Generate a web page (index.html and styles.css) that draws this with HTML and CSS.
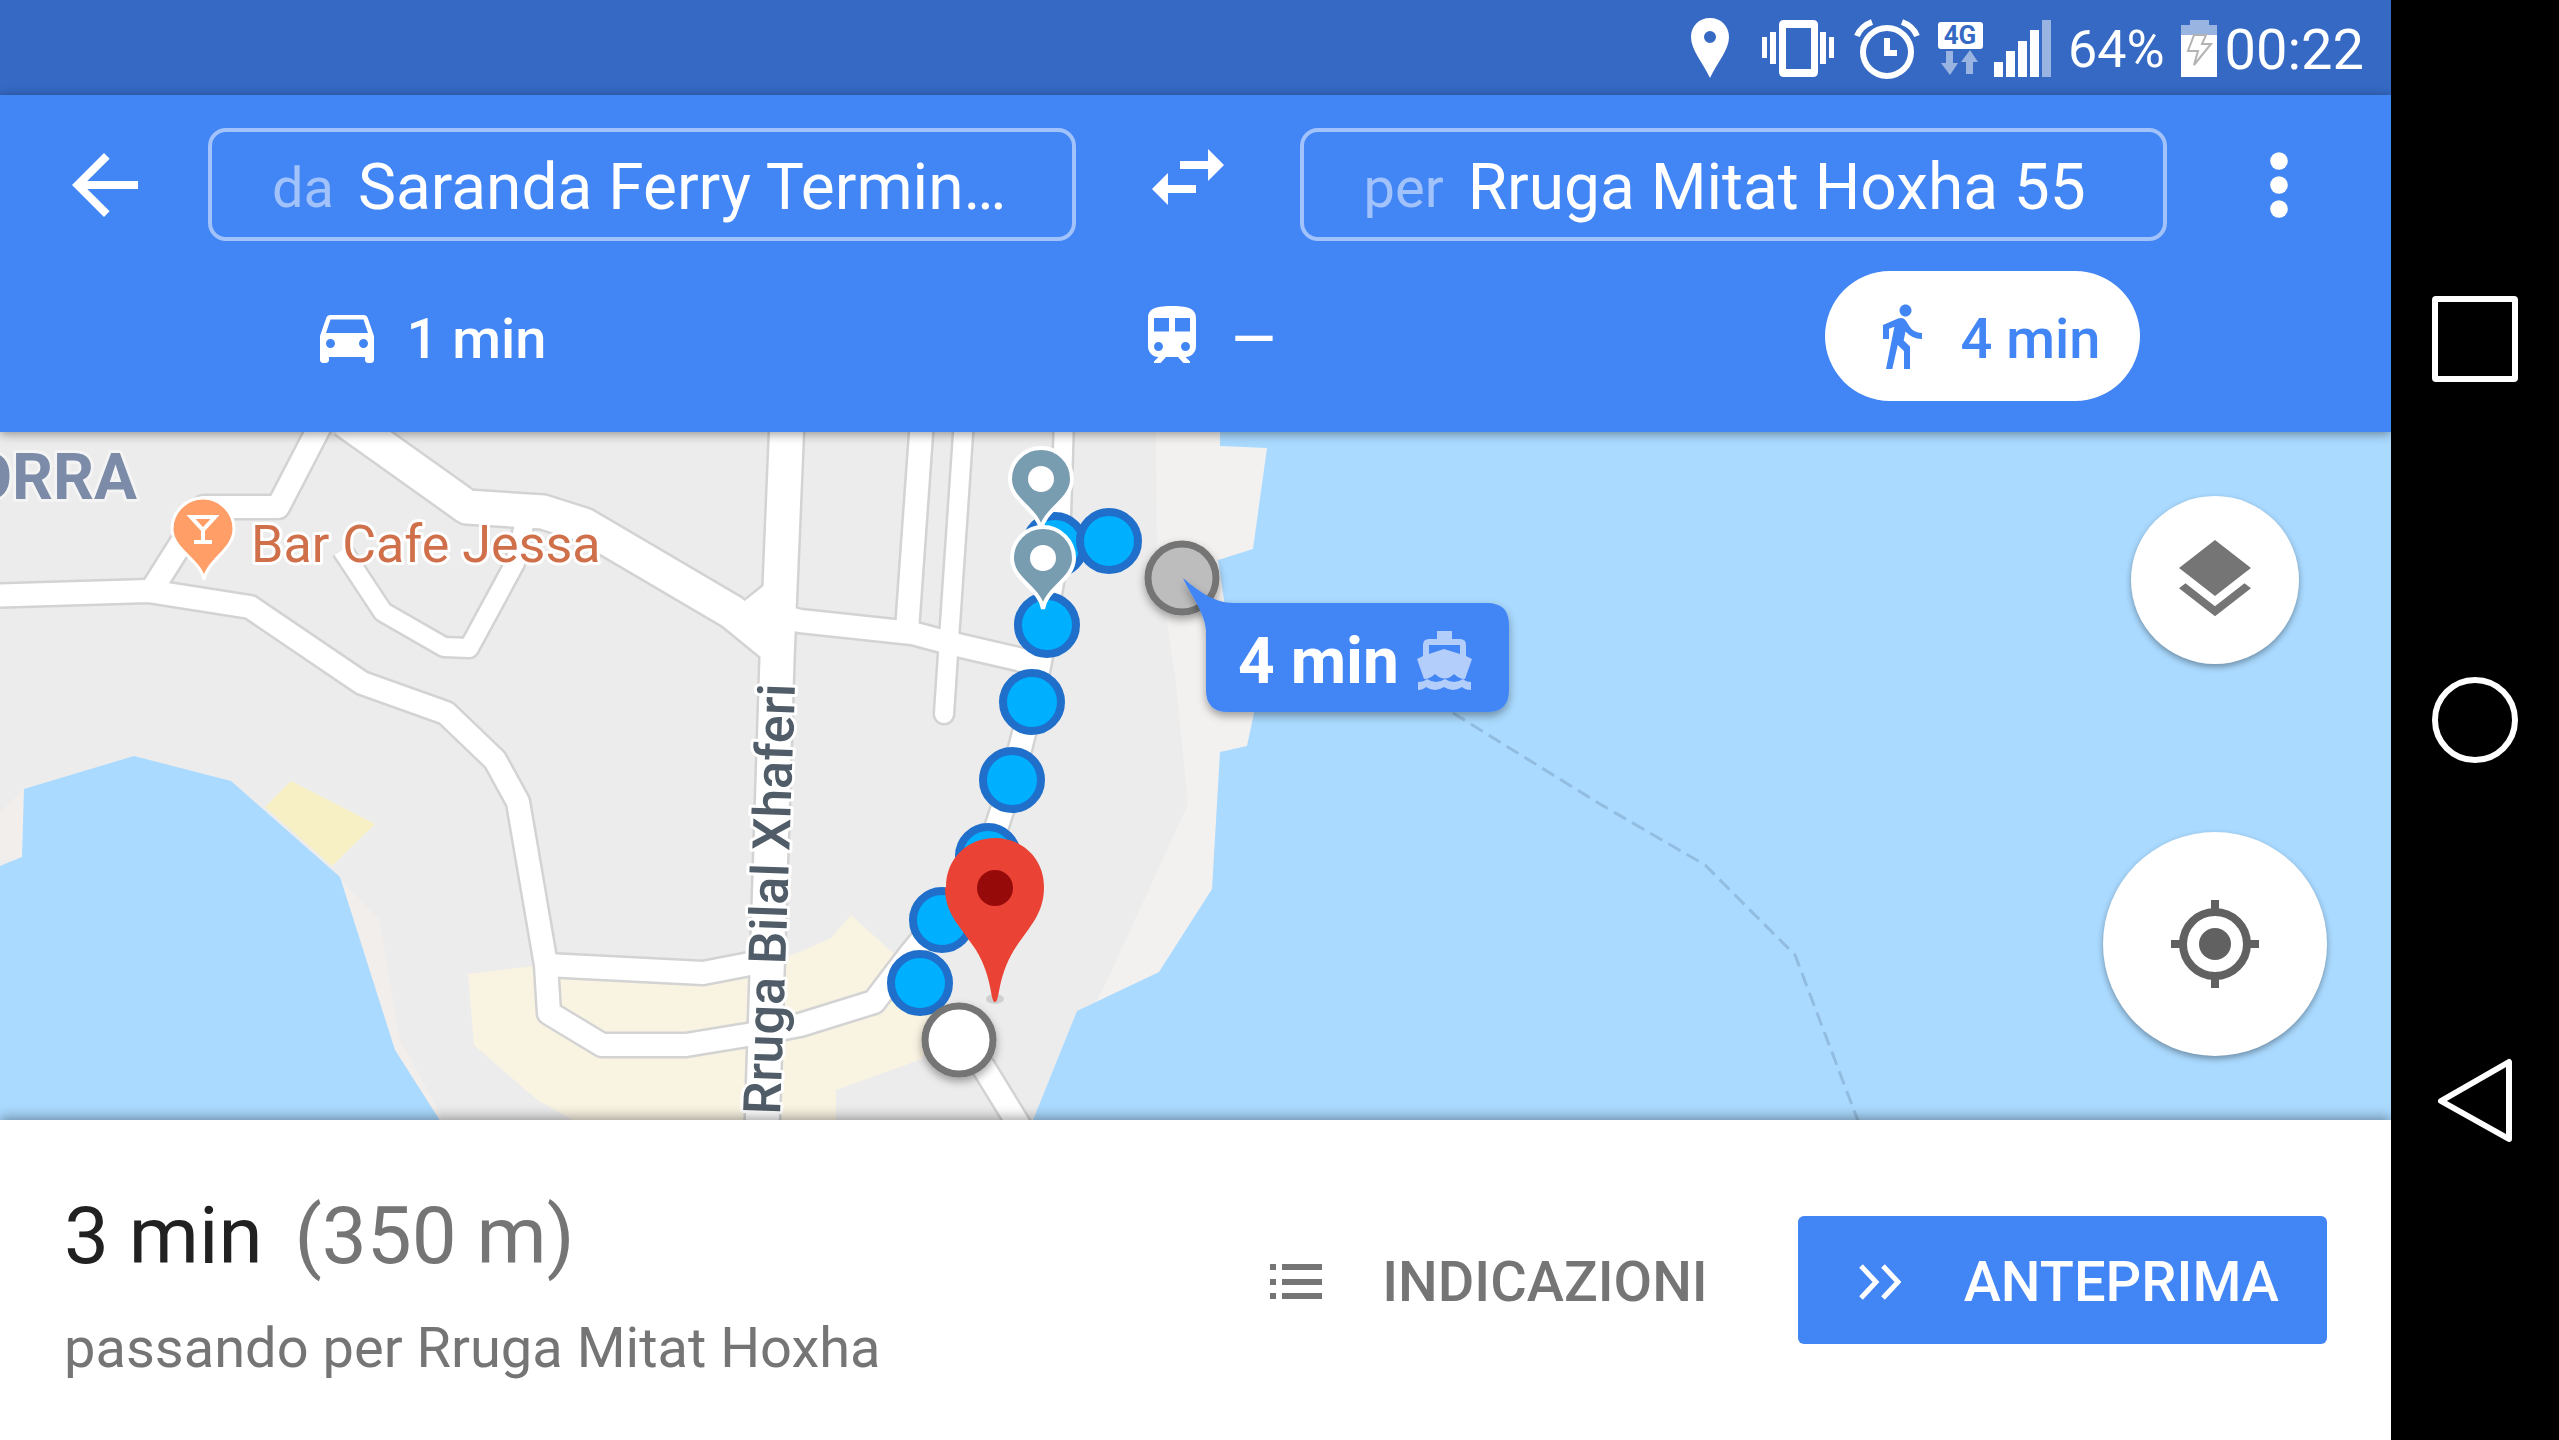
FILE: index.html
```html
<!DOCTYPE html>
<html lang="it">
<head>
<meta charset="utf-8">
<meta name="viewport" content="width=device-width, initial-scale=1">
<title>Indicazioni a piedi</title>
<link rel="stylesheet" href="styles.css">
</head>
<body>
<div class="device">
  <div class="app">
    <div class="status-bar">
      <svg width="64" height="96" viewBox="1684 0 64 96" aria-hidden="true"><path fill="#fff" fill-rule="evenodd" d="M1710 18c-11 0-19 8-19 19 0 13 12 26 19 41 7-15 19-28 19-41 0-11-8-19-19-19zm0 13a6 6 0 1 1 0 12 6 6 0 0 1 0-12z"/></svg>
      <svg width="96" height="96" viewBox="1748 0 96 96" aria-hidden="true"><path fill="#fff" fill-rule="evenodd" d="M1784 20h29q5 0 5 5v47q0 5-5 5h-29q-5 0-5-5V25q0-5 5-5zm2 8v41h25V28zM1770 32h6v32h-6zM1762 37h5v21h-5zM1820 32h6v32h-6zM1829 37h5v21h-5z"/></svg>
      <svg width="84" height="96" viewBox="1844 0 84 96" aria-hidden="true"><g fill="none" stroke="#fff"><circle cx="1887" cy="52" r="24" stroke-width="6"/><path stroke-width="6" d="M1887 38v15h10M1857 36q4-10 15-14M1917 36q-4-10-15-14"/></g></svg>
      <svg width="60" height="96" viewBox="1928 0 60 96" aria-hidden="true"><rect x="1938" y="22" width="45" height="27" rx="3" fill="#fff"/><text x="1960" y="44" class="net-label">4G</text><path fill="#fff" opacity=".5" d="M1946 51h7v12h5l-8 12-9-12h5zM1966 74V62h-5l9-12 8 12h-5v12z"/></svg>
      <svg width="72" height="96" viewBox="1988 0 72 96" aria-hidden="true"><path fill="#fff" d="M1994 62h9v15h-9zM2006 51h9v26h-9zM2018 41h9v36h-9zM2030 30h9v47h-9z"/><path fill="#fff" opacity=".5" d="M2042 20h9v57h-9z"/></svg>
      <span class="battery-level">64%</span>
      <svg width="52" height="96" viewBox="2172 0 52 96" aria-hidden="true"><path fill="#fff" opacity=".5" d="M2189 20h19v5h8v10h-36V25h9z"/><path fill="#fff" d="M2180 35h36v42h-36z"/><path fill="none" stroke="#b3b3b3" stroke-width="2" d="M2193 35h12l-4 9h9l-17 21 4-14h-10z"/></svg>
      <time class="clock">00:22</time>
    </div>

    <header class="header">
      <form class="route-form">
        <button class="icon-button" type="button" aria-label="Indietro"><svg width="96" height="96" viewBox="0 0 24 24"><path fill="currentColor" d="M20.500 11H7.830l5.590-5.590L12 4l-8 8 8 8 1.410-1.410L7.830 13H20.500z"/></svg></button>
        <div class="field"><label for="from">da</label><input id="from" type="text" value="Saranda Ferry Termin…"></div>
        <button class="icon-button wide" type="button" aria-label="Inverti"><svg width="96" height="96" viewBox="0 2 24 24"><path fill="currentColor" d="M6.990 11L3 15l3.990 4v-3H14v-2H6.990zM21 9l-3.990-4v3H10v2h7.010v3z"/></svg></button>
        <div class="field"><label for="to">per</label><input id="to" type="text" value="Rruga Mitat Hoxha 55"></div>
        <button class="icon-button wide" type="button" aria-label="Altre opzioni"><svg width="96" height="96" viewBox="0 0 24 24"><g fill="currentColor"><circle cx="12" cy="6" r="2.200"/><circle cx="12" cy="12" r="2.200"/><circle cx="12" cy="18" r="2.200"/></g></svg></button>
      </form>
      <nav class="modes" aria-label="Mezzo di trasporto">
        <button class="mode" type="button" aria-label="Auto, 1 min"><svg width="72" height="72" viewBox="0 0 24 24"><path fill="currentColor" d="M18.920 6.010C18.720 5.420 18.160 5 17.500 5h-11c-.66 0-1.210.42-1.420 1.010L3 12v8c0 .55.45 1 1 1h1c.55 0 1-.45 1-1v-1h12v1c0 .55.45 1 1 1h1c.55 0 1-.45 1-1v-8l-2.080-5.990zM6.500 16c-.83 0-1.500-.67-1.500-1.500S5.670 13 6.500 13s1.500.67 1.500 1.500S7.330 16 6.500 16zm11 0c-.83 0-1.500-.67-1.500-1.500s.67-1.500 1.500-1.500 1.500.67 1.500 1.500-.67 1.500-1.500 1.500zM5 11l1.500-4.500h11L19 11H5z"/></svg><span>1 min</span></button>
        <button class="mode" type="button" aria-label="Mezzi pubblici"><svg width="72" height="72" viewBox="0 0 24 24"><path fill="currentColor" d="M12 2c-4.420 0-8 .5-8 4v9.500C4 17.430 5.570 19 7.500 19L6 20.500v.5h2.200l1.800-2h4l1.800 2H18v-.5L16.500 19c1.930 0 3.500-1.570 3.500-3.500V6c0-3.500-3.580-4-8-4zM7.500 17c-.83 0-1.500-.67-1.500-1.500S6.670 14 7.500 14s1.500.67 1.500 1.500S8.330 17 7.500 17zm3.500-6.500H6V6h5v4.500zm2 0V6h5v4.500h-5zm3.500 6.500c-.83 0-1.500-.67-1.500-1.500s.67-1.500 1.500-1.500 1.500.67 1.500 1.500-.67 1.500-1.500 1.500z"/></svg><span>—</span></button>
        <button class="mode selected" type="button" aria-pressed="true" aria-label="A piedi, 4 min"><svg width="72" height="72" viewBox="0 0 24 24"><path fill="currentColor" d="M13.500 5.500c1.100 0 2-.9 2-2s-.9-2-2-2-2 .9-2 2 .9 2 2 2zM9.800 8.900L7 23h2.100l1.800-8 2.100 2v6h2v-7.500l-2.100-2 .6-3C14.800 12 16.800 13 19 13v-2c-1.900 0-3.500-1-4.300-2.400l-1-1.600c-.4-.6-1-1-1.700-1-.3 0-.5.1-.8.1L6 8.300V13h2V9.600l1.800-.7"/></svg><span>4 min</span></button>
      </nav>
    </header>

    <main class="map">
      <svg class="map-canvas" viewBox="0 432 2391 688" preserveAspectRatio="xMinYMid slice" role="img" aria-label="Mappa di Saranda">
        <defs>
          <filter id="soft" x="-30%" y="-30%" width="160%" height="170%"><feDropShadow dx="0" dy="4" stdDeviation="4" flood-opacity=".35"/></filter>
          <g id="poi"><path stroke="#fff" stroke-width="4" fill="#789cb0" d="M0 51C-3 30-31 22-31 0a31 31 0 0 1 62 0C31 22 3 30 0 51z"/><circle r="13" fill="#fff"/></g>
          <g id="roads">
            <g class="w22">
              <path d="M-20 596L148 591 250 607 362 683 446 713 495 760 518 802 546 965 549 1013 602 1045 686 1045 747 1035 800 1025 874 1002 912 952 943 915 988 853 1012 780 1032 702 1047 625"/>
              <path d="M546 965L703 973 755 963"/>
              <path d="M153 588L204 507 278 507 322 422"/>
              <path d="M922 420L907 630M777 615L800 621 912 633 953 644 1048 666"/>
              <path d="M959 1041L984 1068 1022 1130"/>
            </g>
            <g class="w18">
              <path d="M1064 420L1060 545 1047 625"/>
              <path d="M342 550L383 612 444 647 469 648 515 563 524 525"/>
              <path stroke-linecap="round" d="M964 420L949 639 944 714"/>
            </g>
            <g class="w32"><path d="M345 420L467 507 543 512 584 525 732 612 776 648M750 618L785 590M787 420L777 659 762 1130"/></g>
          </g>
        </defs>
        <rect y="400" width="2391" height="740" fill="#ececec"/>
        <path fill="#f3f1ef" d="M1156 420L1157 559 1175 675 1188 804 1106 983 1027 1130H1300V420z"/>
        <path fill="#f1eeec" d="M338 877L380 920 400 1040 450 1130H430L390 1040zM0 812L24 789V860H0z"/>
        <path fill="#aadaff" d="M0 866L22 857 24 789 134 756 231 781 340 877 395 1050 446 1130H0zM1220 420V446L1267 448 1253 549 1218 560 1230 640 1254 713 1247 746 1220 752 1212 889 1159 972 1077 1011 1029 1130H2400V420z"/>
        <path fill="#f7f0c4" d="M291 781L375 824 332 866 265 807z"/>
        <path fill="#f9f3e2" d="M468 974L533 966 740 972 800 952 831 938 851 915 892 952 945 1010 922 1059 836 1090V1130H590L536 1099 474 1045z"/>
        <path d="M1453 713L1600 804 1705 865 1795 955 1860 1126" fill="none" stroke="#93bde0" stroke-width="3" stroke-dasharray="14 7"/>
        <use href="#roads" class="road-edge"/>
        <use href="#roads" class="road-fill"/>

        <text class="label district" x="137" y="499" text-anchor="end">ORRA</text>
        <text class="label place" x="251" y="562">Bar Cafe Jessa</text>
        <text class="label street" transform="translate(780 1115) rotate(-88)">Rruga Bilal Xhaferi</text>
        <path stroke="#fff" stroke-width="3" fill="#ff9e67" d="M204 580C201 560 172 550 172 529a31 31 0 0 1 62 0C234 550 207 560 204 580z"/>
        <path fill="none" stroke="#fff" stroke-width="4" d="M191 517H215L203 530zM203 529V541M194 542H212"/>

        <g class="route-dots">
          <circle cx="1055" cy="545" r="29"/><circle cx="1109" cy="541" r="29"/><circle cx="1047" cy="625" r="29"/><circle cx="1032" cy="702" r="29"/><circle cx="1012" cy="780" r="29"/><circle cx="988" cy="856" r="29"/><circle cx="942" cy="920" r="29"/><circle cx="920" cy="983" r="29"/>
        </g>
        <use href="#poi" x="1041" y="479"/>
        <use href="#poi" x="1043" y="558"/>
        <g stroke="#757575" stroke-width="7" filter="url(#soft)"><circle cx="1182" cy="578" r="34" fill="#bdbdbd"/><circle cx="959" cy="1040" r="34" fill="#fff"/></g>
        <ellipse cx="995" cy="999" rx="9" ry="5" fill="#000" opacity=".12"/>
        <path fill="#ea4335" d="M995 1002C990 1002 993 978 976 950 962 928 945 915 945 888a50 50 0 0 1 1-1C946 858 968 838 995 838S1044 858 1044 887C1044 915 1028 928 1014 950 997 978 1000 1002 995 1002z"/>
        <circle cx="995" cy="888" r="18" fill="#960a0a"/>

        <g filter="url(#soft)"><path fill="#4285f4" d="M1183 578C1196 589 1213 603 1234 603H1487Q1509 603 1509 625V690Q1509 712 1487 712H1228Q1206 712 1206 690V632C1206 614 1190 594 1183 578z"/></g>
        <text class="callout-time" x="1238" y="683">4 min</text>
        <g transform="translate(1414 628)"><path fill="#b3cefb" fill-rule="evenodd" d="M23 3h15v8h8q6 0 6 6v11l6 3-7 20q-6 0-11-5-9 9-19 0-5 5-11 5L3 31l6-3V17q0-6 6-6h8zM15 17v9l15-5 16 5v-9zM4 54q6 0 9-3 9 6 18 0 9 6 18 0 3 3 8 3v8q-6 0-9-3-9 6-18 0-9 6-18 0-3 3-8 3z"/></g>
      </svg>
      <div class="map-controls">
        <button class="fab" type="button" aria-label="Livelli"><svg width="96" height="96" viewBox="0 0 24 24"><path fill="#757575" d="M11.990 18.540l-7.370-5.730L3 14.070l9 7 9-7-1.630-1.270-7.380 5.740zM12 16l7.360-5.730L21 9l-9-7-9 7 1.630 1.270L12 16z"/></svg></button>
        <button class="fab large" type="button" aria-label="La mia posizione"><svg width="96" height="96" viewBox="0 0 24 24"><g fill="none" stroke="#616161" stroke-width="2"><circle cx="12" cy="12" r="8"/><path d="M12 1v3M12 20v3M1 12h3M20 12h3"/></g><circle cx="12" cy="12" r="4" fill="#616161"/></svg></button>
      </div>
    </main>

    <section class="sheet">
      <div class="summary">
        <h1>3 min <span class="distance">(350 m)</span></h1>
        <p>passando per Rruga Mitat Hoxha</p>
      </div>
      <div class="actions">
        <button class="action" type="button"><svg width="52" height="36" viewBox="0 0 52 36" aria-hidden="true"><path fill="currentColor" d="M0 0h6v6H0zM12 0h40v6H12zM0 15h6v6H0zM12 15h40v6H12zM0 29h6v6H0zM12 29h40v6H12z"/></svg>INDICAZIONI</button>
        <button class="action primary" type="button"><svg width="46" height="36" viewBox="0 0 46 36" aria-hidden="true"><path fill="none" stroke="currentColor" stroke-width="5" d="M3 2l15 16L3 34M25 2l15 16-15 16"/></svg>ANTEPRIMA</button>
      </div>
    </section>
  </div>

  <nav class="system-nav" aria-label="Navigazione di sistema">
    <button type="button" aria-label="Recenti"><svg width="86" height="86" viewBox="0 0 86 86"><rect x="3" y="3" width="80" height="80" rx="1"/></svg></button>
    <button type="button" aria-label="Home"><svg width="86" height="86" viewBox="0 0 86 86"><circle cx="43" cy="43" r="40"/></svg></button>
    <button type="button" aria-label="Indietro"><svg width="86" height="86" viewBox="0 0 86 86"><path stroke-linejoin="round" d="M77 4V81L9 43z"/></svg></button>
  </nav>
</div>
</body>
</html>
```
FILE: styles.css
```css
* { box-sizing: border-box; }

body {
  margin: 0;
  font-family: Roboto, "Noto Sans", sans-serif;
  background: #000;
}

svg { display: block; flex: none; }

button {
  margin: 0;
  padding: 0;
  border: 0;
  background: none;
  color: inherit;
  font: inherit;
  cursor: pointer;
}

.device {
  display: grid;
  grid-template-columns: minmax(0, 1fr) 168px;
  min-height: 100vh;
}

.app {
  display: flex;
  flex-direction: column;
  background: #fff;
}

/* Status bar */
.status-bar {
  display: flex;
  align-items: center;
  justify-content: flex-end;
  height: 95px;
  padding-right: 27px;
  overflow: hidden;
  background: #3569c3;
  color: #fff;
  line-height: 64px;
}

.battery-level { padding: 4px 8px 0; font-size: 52px; }
.clock { padding-top: 4px; font-size: 56px; }

.net-label {
  font-size: 26px;
  font-weight: 700;
  text-anchor: middle;
  fill: #3569c3;
}

/* Route header */
.header {
  position: relative;
  z-index: 1;
  display: grid;
  grid-template-columns: minmax(0, 1fr);
  gap: 30px;
  padding: 33px 0 31px;
  background: #4285f4;
  color: #fff;
  box-shadow: 0 2px 10px rgba(0, 0, 0, .4);
}

.route-form {
  display: flex;
  align-items: center;
  gap: 64px;
  padding: 0 64px;
}

.icon-button {
  display: flex;
  flex: none;
  align-items: center;
  justify-content: center;
  width: 80px;
  height: 96px;
}

.icon-button.wide { width: 96px; }

.field {
  display: flex;
  flex: 1;
  align-items: center;
  gap: 24px;
  min-width: 0;
  height: 113px;
  padding: 6px 32px 0 60px;
  border: 4px solid #a1c2fa;
  border-radius: 18px;
  font-size: 64px;
}

.field label { color: #a1c2fa; font-size: 56px; }

.field input {
  flex: 1;
  min-width: 0;
  padding: 0;
  border: 0;
  outline: 0;
  background: none;
  color: #fff;
  font: inherit;
}

.modes {
  display: grid;
  grid-template-columns: repeat(3, 1fr);
  justify-items: center;
  padding: 0 20px 0 40px;
}

.mode {
  display: flex;
  align-items: center;
  gap: 24px;
  height: 130px;
  padding: 0 40px;
  border-radius: 65px;
  font-size: 56px;
  font-weight: 500;
}

.mode span { padding-top: 6px; }

.mode.selected { background: #fff; color: #4285f4; }

/* Map */
.map {
  position: relative;
  flex: 1;
  min-height: 560px;
  overflow: hidden;
}

.map-canvas {
  position: absolute;
  inset: 0;
  width: 100%;
  height: 100%;
}

#roads { fill: none; stroke-linejoin: round; }
.w18 { stroke-width: calc(18px + var(--edge)); }
.w22 { stroke-width: calc(22px + var(--edge)); }
.w32 { stroke-width: calc(33px + var(--edge)); }
.road-edge { --edge: 5px; stroke: #d3d3d3; }
.road-fill { --edge: 0px; stroke: #fff; }

.label {
  paint-order: stroke;
  stroke: #fff;
  stroke-width: 6px;
  stroke-linejoin: round;
}

.district { font-size: 64px; font-weight: 700; fill: #7b8ba8; stroke: #f4f4f4; }
.place { font-size: 52px; fill: #d0704b; }
.street { font-size: 52px; font-weight: 500; fill: #505c68; }

.route-dots { fill: #00b0ff; stroke: #1f6fcb; stroke-width: 8px; }

.callout-time { font-size: 64px; font-weight: 700; fill: #fff; }

.map-controls {
  position: absolute;
  top: 64px;
  right: 64px;
  display: flex;
  flex-direction: column;
  align-items: center;
  gap: 168px;
}

.fab {
  display: flex;
  align-items: center;
  justify-content: center;
  width: 168px;
  height: 168px;
  border-radius: 50%;
  background: #fff;
  box-shadow: 0 3px 6px rgba(0, 0, 0, .35);
}

.fab.large { width: 224px; height: 224px; }

/* Bottom sheet */
.sheet {
  position: relative;
  z-index: 1;
  display: flex;
  align-items: center;
  justify-content: space-between;
  min-height: 320px;
  padding: 0 64px;
  background: #fff;
  color: #757575;
  box-shadow: 0 -2px 12px rgba(0, 0, 0, .4);
}

.summary { padding-top: 12px; }

.summary h1 {
  margin: 0;
  color: #212121;
  font-size: 80px;
  font-weight: 400;
  line-height: 96px;
}

.distance { margin-left: 12px; color: #757575; }

.summary p {
  margin: 28px 0 0;
  font-size: 56px;
  line-height: 72px;
}

.actions { display: flex; align-items: center; gap: 90px; }

.action {
  display: flex;
  align-items: center;
  gap: 60px;
  height: 128px;
  padding-top: 4px;
  font-size: 56px;
  font-weight: 500;
}

.action.primary {
  padding: 4px 48px 0 60px;
  border-radius: 6px;
  background: #4285f4;
  color: #fff;
}

/* System navigation */
.system-nav {
  display: flex;
  flex-direction: column;
  align-items: center;
  justify-content: center;
  gap: 295px;
  background: #000;
}

.system-nav svg { fill: none; stroke: #fff; stroke-width: 6px; }
```
